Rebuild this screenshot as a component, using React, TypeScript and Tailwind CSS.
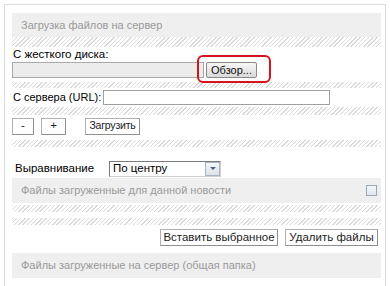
import React from "react";

const hatch =
  "bg-[repeating-linear-gradient(135deg,#dadada_0px,#dadada_1px,#ffffff_1px,#ffffff_3px)]";

function Stripe({ className = "" }: { className?: string }) {
  return <div className={`${hatch} ${className}`} />;
}

function Btn({ children, className = "" }: { children: React.ReactNode; className?: string }) {
  return (
    <div
      className={`flex items-center justify-center whitespace-nowrap h-[17px] border border-[#b0b0b0] border-r-[#8f8f8f] border-b-[#8f8f8f] bg-white text-[#222] ${className}`}
    >
      {children}
    </div>
  );
}

export default function App() {
  return (
    <div
      className="w-[390px] h-[286px] bg-white overflow-hidden p-[4px] text-black whitespace-nowrap"
      style={{ fontFamily: "'Liberation Sans', Arial, sans-serif" }}
    >
      <div className="border border-[#dcdcdc] h-[290px] pl-[7px] pr-[4px] pt-[8px] flex flex-col">
        <div className="h-[24px] shrink-0 bg-[#efefef] flex items-center pl-[9px] text-[11px] text-[#9a9a9a]">
          Загрузка файлов на сервер
        </div>
        <Stripe className="h-[10px] shrink-0" />
        <div className="h-[14px] shrink-0 text-[11.5px] leading-[14px] pl-[1px]">С жесткого диска:</div>
        <div className="h-[18px] shrink-0 flex items-center">
          <div className="w-[192px] h-[16px] border border-[#a9a9a9] bg-[#ececec]" />
          <div className="relative ml-[2px]">
            <div className="w-[51px] h-[16px] border border-[#8a8a8a] rounded-[2px] bg-[linear-gradient(#f7f7f7,#dadada)] flex items-center justify-center text-[11px] text-[#111]">
              Обзор...
            </div>
            <div className="absolute left-[-9px] top-[-7px] w-[74px] h-[28px] border-2 border-[#d4151b] rounded-[6px]" />
          </div>
        </div>
        <Stripe className="h-[6px] mt-[3px] shrink-0" />
        <div className="h-[19px] shrink-0 flex items-center">
          <span className="text-[11px] w-[91px] shrink-0 pl-[1px]">С сервера (URL):</span>
          <div className="w-[227px] h-[15px] border border-[#a0a0a0] bg-white" />
        </div>
        <Stripe className="h-[8px] shrink-0" />
        <div className="h-[22px] shrink-0 flex items-center">
          <Btn className="w-[22px] text-[11.5px]">-</Btn>
          <Btn className="w-[25px] ml-[7px] text-[11.5px]">+</Btn>
          <Btn className="w-[55px] ml-[19px] text-[10.5px] tracking-[-0.2px]">Загрузить</Btn>
        </div>
        <Stripe className="h-[7px] mt-[3px] shrink-0" />
        <div className="h-[17px] mt-[13px] shrink-0 flex items-center">
          <span className="text-[11.5px] w-[97px] shrink-0 pl-[3px]">Выравнивание</span>
          <div className="w-[112px] h-[16px] border border-[#7a7a7a] border-r-[#cfcfcf] border-b-[#cfcfcf] flex items-center bg-white">
            <span className="flex-1 text-[11.5px] pl-[3px]">По центру</span>
            <div className="w-[15px] h-[14px] border border-[#a9b6c6] bg-[linear-gradient(#f4f6f9,#dde3ea)] flex items-center justify-center">
              <div className="w-0 h-0 border-l-[3px] border-r-[3px] border-t-[3px] border-l-transparent border-r-transparent border-t-[#4d6185]" />
            </div>
          </div>
        </div>
        <div className="h-[25px] mt-[1px] shrink-0 bg-[#efefef] flex items-center pl-[9px] pr-[4px] text-[11px] text-[#9a9a9a]">
          <span className="flex-1">Файлы загруженные для данной новости</span>
          <div className="w-[11px] h-[11px] border border-[#9aa7b7] bg-[linear-gradient(#f4f6f9,#e2e7ee)]" />
        </div>
        <Stripe className="h-[7px] mt-[2px] shrink-0" />
        <Stripe className="h-[7px] mt-[6px] shrink-0" />
        <div className="h-[17px] mt-[4px] shrink-0 flex items-center justify-end pr-[3px]">
          <Btn className="w-[118px] text-[11.5px]">Вставить выбранное</Btn>
          <Btn className="w-[93px] ml-[7px] text-[11.5px]">Удалить файлы</Btn>
        </div>
        <div className="h-[25px] mt-[7px] shrink-0 bg-[#efefef] flex items-center pl-[9px] text-[11px] text-[#9a9a9a]">
          Файлы загруженные на сервер (общая папка)
        </div>
      </div>
    </div>
  );
}
